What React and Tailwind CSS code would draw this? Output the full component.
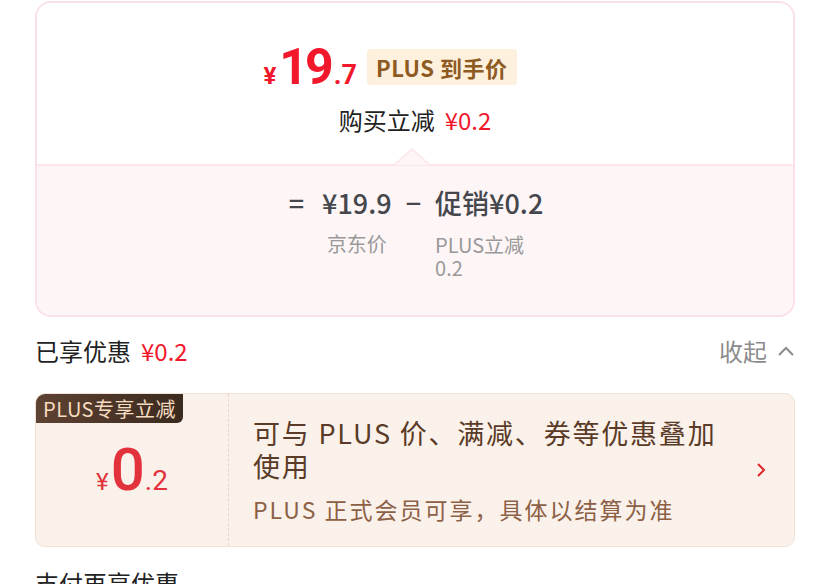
import React from "react";

export default function App() {
  return (
    <div
      className="w-[829px] h-[584px] overflow-hidden bg-white pl-[35px] pr-[34px] pt-[1px]"
      style={{ fontFamily: '"Noto Sans CJK SC", "Noto Sans", Roboto, sans-serif' }}
    >
      {/* Price card */}
      <div className="h-[316px] rounded-[16px] border-2 border-[#fbe1e7] overflow-hidden flex flex-col">
        <div className="h-[161px] bg-white flex flex-col items-center">
          <div className="flex items-center mt-[39px] pr-[50px]">
            <div className="flex items-baseline text-[#f2182c] font-bold leading-none" style={{ fontFamily: "Roboto, sans-serif" }}>
              <span className="text-[24px] mr-[3px]">¥</span>
              <span className="text-[50px] tracking-[-3px]">19</span>
              <span className="text-[27px] ml-[3px]">.7</span>
            </div>
            <div className="ml-[10px] h-[36px] px-[9px] rounded-[4px] bg-[#fdf0dd] flex items-center text-[22px] tracking-[0.5px] font-bold text-[#8d5a22] leading-none">
              PLUS 到手价
            </div>
          </div>
          <div className="mt-[16px] flex items-center text-[24px] leading-none">
            <span className="text-[#222]">购买立减</span>
            <span className="ml-[10px] text-[#f2182c]">¥0.2</span>
          </div>
        </div>
        <div className="relative border-t-2 border-[#fbe6ea] flex-1 bg-[#fdf5f6]">
          <svg className="absolute left-[357px] top-[-18px]" width="36" height="18" viewBox="0 0 36 18">
            <path d="M0 17 L18 1 L36 17 Z" fill="#fdf5f6" />
            <path d="M0 17 L18 1 L36 17" fill="none" stroke="#fbe6ea" strokeWidth="1.5" />
          </svg>
          <div className="flex justify-center pt-[20px] pl-[2px]">
            <div className="flex items-start text-[#45474d] font-medium text-[27px] leading-[34px]">
              <span className="mr-[18px]">=</span>
              <div className="flex flex-col items-center">
                <span>¥19.9</span>
                <span className="mt-[12px] text-[20px] font-normal leading-[24px] text-[#999]">京东价</span>
              </div>
              <span className="mx-[14px]">−</span>
              <div className="flex flex-col items-start">
                <span>促销¥0.2</span>
                <span className="mt-[13px] text-[20px] font-normal leading-[23px] text-[#999] whitespace-pre">{"PLUS立减\n0.2"}</span>
              </div>
            </div>
          </div>
        </div>
      </div>

      {/* 已享优惠 */}
      <div className="mt-[19px] flex items-center justify-between h-[30px]">
        <div className="flex items-center text-[24px] leading-none">
          <span className="text-[#222]">已享优惠</span>
          <span className="ml-[10px] text-[#f2182c]">¥0.2</span>
        </div>
        <div className="flex items-center text-[24px] text-[#8c8c8c] leading-none">
          <span>收起</span>
          <svg className="ml-[10px]" width="18" height="12" viewBox="0 0 18 12">
            <path d="M2 10 L9 3 L16 10" fill="none" stroke="#8c8c8c" strokeWidth="2" />
          </svg>
        </div>
      </div>

      {/* coupon */}
      <div className="mt-[27px] h-[154px] rounded-[10px] border border-[#f0e2d6] bg-[#faf1ea] flex overflow-hidden">
        <div className="w-[193px] flex flex-col border-r border-dashed border-[#e8d8ca]">
          <div className="self-start h-[29px] px-[7px] rounded-br-[6px] bg-gradient-to-r from-[#5e4232] to-[#3b2a1f] text-[#f6dcc0] text-[20px] tracking-[0.5px] leading-[29px]">
            PLUS专享立减
          </div>
          <div className="flex-1 flex items-center justify-center pb-[30px]">
            <div className="flex items-baseline text-[#e2333c] leading-none" style={{ fontFamily: "Roboto, sans-serif" }}>
              <span className="text-[24px] mr-[2px]">¥</span>
              <span className="text-[60px] font-medium">0</span>
              <span className="text-[28px]">.2</span>
            </div>
          </div>
        </div>
        <div className="flex-1 flex items-center pl-[24px] pr-[28px]">
          <div className="flex-1 pb-[2px]">
            <div className="text-[27px] tracking-[1.8px] leading-[33px] text-[#5a3b27] w-[475px]">可与 PLUS 价、满减、券等优惠叠加使用</div>
            <div className="mt-[13px] text-[23px] tracking-[2px] leading-[28px] text-[#8c6045]">PLUS 正式会员可享，具体以结算为准</div>
          </div>
          <svg width="10" height="16" viewBox="0 0 10 16">
            <path d="M2 2 L8 8 L2 14" fill="none" stroke="#e0262f" strokeWidth="2" />
          </svg>
        </div>
      </div>

      <div className="mt-[24px] text-[24px] leading-none text-[#222]">支付再享优惠</div>
    </div>
  );
}
